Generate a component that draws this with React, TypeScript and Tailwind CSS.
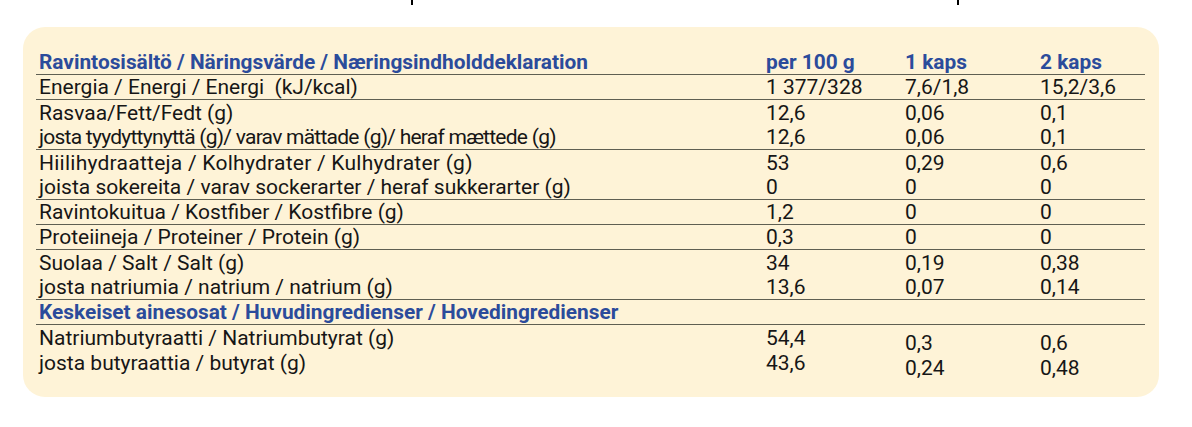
import React from "react";

type Row = {
  label: string;
  a: string;
  b: string;
  c: string;
  line?: boolean;
  head?: boolean;
  shift?: boolean;
  track?: string;
};

const rows: Row[] = [
  { label: "Ravintosisältö / Näringsvärde / Næringsindholddeklaration", a: "per 100 g", b: "1 kaps", c: "2 kaps", line: true, head: true },
  { label: "Energia / Energi / Energi  (kJ/kcal)", a: "1 377/328", b: "7,6/1,8", c: "15,2/3,6", line: true },
  { label: "Rasvaa/Fett/Fedt (g)", a: "12,6", b: "0,06", c: "0,1" },
  { label: "josta tyydyttynyttä (g)/ varav mättade (g)/ heraf mættede (g)", a: "12,6", b: "0,06", c: "0,1", line: true, track: "tracking-[-0.75px]" },
  { label: "Hiilihydraatteja / Kolhydrater / Kulhydrater (g)", a: "53", b: "0,29", c: "0,6", track: "tracking-[0.25px]" },
  { label: "joista sokereita / varav sockerarter / heraf sukkerarter (g)", a: "0", b: "0", c: "0", line: true },
  { label: "Ravintokuitua / Kostfiber / Kostfibre (g)", a: "1,2", b: "0", c: "0", line: true },
  { label: "Proteiineja / Proteiner / Protein (g)", a: "0,3", b: "0", c: "0", line: true },
  { label: "Suolaa / Salt / Salt (g)", a: "34", b: "0,19", c: "0,38" },
  { label: "josta natriumia / natrium / natrium (g)", a: "13,6", b: "0,07", c: "0,14", line: true },
  { label: "Keskeiset ainesosat / Huvudingredienser / Hovedingredienser", a: "", b: "", c: "", line: true, head: true },
  { label: "Natriumbutyraatti / Natriumbutyrat (g)", a: "54,4", b: "0,3", c: "0,6", shift: true },
  { label: "josta butyraattia / butyrat (g)", a: "43,6", b: "0,24", c: "0,48", shift: true },
];

export default function App() {
  return (
    <div
      className="relative w-[1192px] h-[427px] bg-white pt-[27px] pl-[23px]"
      style={{ fontFamily: "Roboto, 'Liberation Sans', sans-serif" }}
    >
      <div className="absolute left-[411px] top-0 w-[2px] h-[5px] bg-black" />
      <div className="absolute left-[957px] top-0 w-[2px] h-[5px] bg-black" />
      <div className="w-[1136px] h-[370px] rounded-[22px] bg-[#fef3d7] pt-[23px] pl-[13px] pr-[14px]">
        {rows.map((r, i) => (
          <div
            key={i}
            className={
              "grid grid-cols-[727px_139px_135px_1fr] h-[25px] items-center whitespace-pre " +
              (r.line ? "border-b border-[#5f5f52] " : "") +
              (r.head
                ? "font-bold text-[#2b4b9b] text-[20.85px] "
                : "text-[#161616] text-[21px] ")
            }
          >
            <div className={"pl-[3px] leading-[24px] " + (r.track ?? "")}>{r.label}</div>
            <div className="pl-[3px] leading-[24px]">{r.a}</div>
            <div className={"pl-[3px] leading-[24px] " + (r.shift ? "translate-y-[5px]" : "")}>{r.b}</div>
            <div className={"pl-[3px] leading-[24px] " + (r.shift ? "translate-y-[5px]" : "")}>{r.c}</div>
          </div>
        ))}
      </div>
    </div>
  );
}
